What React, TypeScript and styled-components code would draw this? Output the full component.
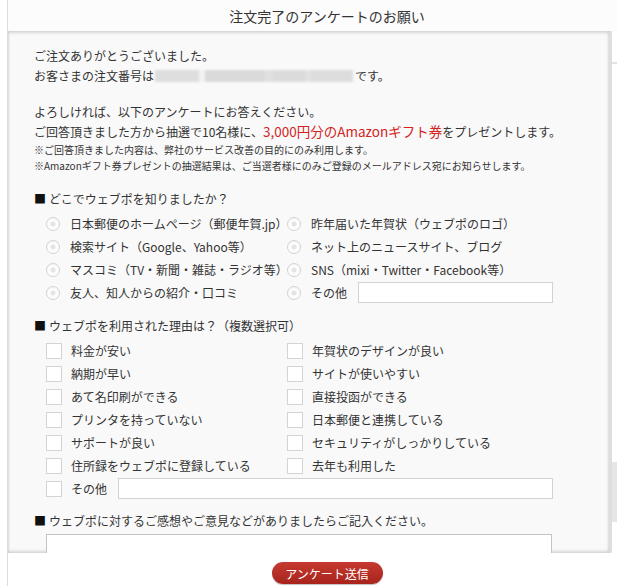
import React from 'react'
import styled, { createGlobalStyle } from 'styled-components'

const GlobalStyle = createGlobalStyle`
  html, body {
    margin:0;
    padding:0;
    background:#fff;
    overflow:hidden;
  }
  body {
    font-family:"Noto Sans CJK JP", "Noto Sans", sans-serif;
    color:#333;
  }
`
const Modal = styled.div`
    width:638px;
    height:586px;
    margin-left:7px;
    border-left:1px solid #dcdcdc;
    background:#fdfdfd;
    display:flex;
    flex-direction:column;
`
const Header = styled.header`
    height:31px;
    flex-shrink:0;
    display:flex;
    align-items:center;
    justify-content:center;
    font-size:14px;
    color:#333;
    background:#fcfcfc;
`
const Middle = styled.div`
    height:522px;
    flex-shrink:0;
    display:flex;
`
const Panel = styled.section`
    width:604px;
    flex-shrink:0;
    box-sizing:border-box;
    border-right:3px solid #dedede;
    background:#f9f9f9;
    box-shadow:inset 0 2px 3px rgba(0,0,0,.14), inset 0 -2px 3px rgba(0,0,0,.14);
    padding:15px 0 0 26px;
    overflow:hidden;
`
const ScrollStrip = styled.div`
    flex:1;
    display:flex;
    flex-direction:column;
    background:#fff;
`
const Tick = styled.div`
    margin-top:31px;
    height:2px;
    background:#e2e2e2;
`
const Thumb = styled.div`
    margin-top:398px;
    height:60px;
    background:#e6e6e6;
`
const Para = styled.p<{ $top?: number }>`
    margin:${p => p.$top ?? 0}px 0 0;
    font-size:12px;
    line-height:20px;
`
const Note = styled.p`
    margin:0;
    font-size:10px;
    line-height:16px;
`
const Red = styled.span`
    color:#d2231d;
    font-size:13.5px;
    line-height:1;
`
const Masked = styled.span`
    display:inline-block;
    width:198px;
    height:12px;
    margin:0 2px 0 1px;
    vertical-align:-1px;
    background:linear-gradient(90deg,
        #dedede 0 44px, #f2f2f2 44px 50px, #dadada 50px 110px,
        #e0e0e0 110px 118px, #dbdbdb 118px 150px, #e2e2e2 150px 156px, #dddddd 156px 198px);
    filter:blur(1px);
`
const Heading = styled.h2<{ $top: number }>`
    margin:${p => p.$top}px 0 3px;
    font-size:12px;
    line-height:20px;
    font-weight:normal;
    color:#333;
`
const Square = styled.span`
    color:#111;
    margin-right:3px;
`
const OptionGrid = styled.div`
    display:grid;
    grid-template-columns:241px 1fr;
    grid-auto-rows:23px;
    padding-left:12px;
`
const Option = styled.label<{ $wide?: boolean }>`
    display:flex;
    align-items:center;
    gap:9px;
    font-size:12px;
    color:#333;
    grid-column:${p => p.$wide ? '1 / -1' : 'auto'};
`
const Radio = styled.span`
    width:14px;
    height:14px;
    margin-right:1px;
    box-sizing:border-box;
    border-radius:50%;
    border:1px solid #d3d3d3;
    background:radial-gradient(circle, #e4e4e4 0 2px, #fdfdfd 3px);
    box-shadow:inset 0 1px 1px rgba(0,0,0,.05);
    flex-shrink:0;
`
const Check = styled.span`
    width:16px;
    height:16px;
    box-sizing:border-box;
    border:1px solid #d4d4d4;
    background:#fff;
    flex-shrink:0;
`
const TextBox = styled.span<{ $w: number }>`
    width:${p => p.$w}px;
    height:21px;
    margin-left:2px;
    box-sizing:border-box;
    border:1px solid #d2d2d2;
    background:#fff;
`
const TextArea = styled.div`
    margin-left:12px;
    width:506px;
    height:60px;
    box-sizing:border-box;
    border:1px solid #c4c4c4;
    background:#fff;
`
const Footer = styled.footer`
    flex:1;
    display:flex;
    justify-content:center;
    padding-top:9px;
    background:#fff;
`
const SubmitButton = styled.button`
    width:111px;
    height:22px;
    border:none;
    border-radius:11px;
    background:linear-gradient(#c63a30, #a7241c);
    box-shadow:0 1px 1px rgba(0,0,0,.25);
    color:#fff;
    font-family:inherit;
    font-size:12px;
    padding:0;
`

const sources = [
    '日本郵便のホームページ（郵便年賀.jp）',
    '昨年届いた年賀状（ウェブポのロゴ）',
    '検索サイト（Google、Yahoo等）',
    'ネット上のニュースサイト、ブログ',
    'マスコミ（TV・新聞・雑誌・ラジオ等）',
    'SNS（mixi・Twitter・Facebook等）',
    '友人、知人からの紹介・口コミ',
]

const reasons = [
    '料金が安い',
    '年賀状のデザインが良い',
    '納期が早い',
    'サイトが使いやすい',
    'あて名印刷ができる',
    '直接投函ができる',
    'プリンタを持っていない',
    '日本郵便と連携している',
    'サポートが良い',
    'セキュリティがしっかりしている',
    '住所録をウェブポに登録している',
    '去年も利用した',
]

export default function App() {
    return (
        <>
            <GlobalStyle />
            <Modal>
                <Header>注文完了のアンケートのお願い</Header>
                <Middle>
                    <Panel>
                        <Para>ご注文ありがとうございました。</Para>
                        <Para>お客さまの注文番号は<Masked />です。</Para>
                        <Para $top={16}>よろしければ、以下のアンケートにお答えください。</Para>
                        <Para>ご回答頂きました方から抽選で10名様に、<Red>3,000円分のAmazonギフト券</Red>をプレゼントします。</Para>
                        <Note>※ご回答頂きました内容は、弊社のサービス改善の目的にのみ利用します。</Note>
                        <Note>※Amazonギフト券プレゼントの抽選結果は、ご当選者様にのみご登録のメールアドレス宛にお知らせします。</Note>

                        <Heading $top={15}><Square>■</Square>どこでウェブポを知りましたか？</Heading>
                        <OptionGrid>
                            {sources.map(s => (
                                <Option key={s}><Radio />{s}</Option>
                            ))}
                            <Option><Radio />その他<TextBox $w={195} /></Option>
                        </OptionGrid>

                        <Heading $top={12}><Square>■</Square>ウェブポを利用された理由は？（複数選択可）</Heading>
                        <OptionGrid>
                            {reasons.map(r => (
                                <Option key={r}><Check />{r}</Option>
                            ))}
                            <Option $wide><Check />その他<TextBox $w={435} /></Option>
                        </OptionGrid>

                        <Heading $top={11}><Square>■</Square>ウェブポに対するご感想やご意見などがありましたらご記入ください。</Heading>
                        <TextArea />
                    </Panel>
                    <ScrollStrip>
                        <Tick />
                        <Thumb />
                    </ScrollStrip>
                </Middle>
                <Footer>
                    <SubmitButton>アンケート送信</SubmitButton>
                </Footer>
            </Modal>
        </>
    )
}
